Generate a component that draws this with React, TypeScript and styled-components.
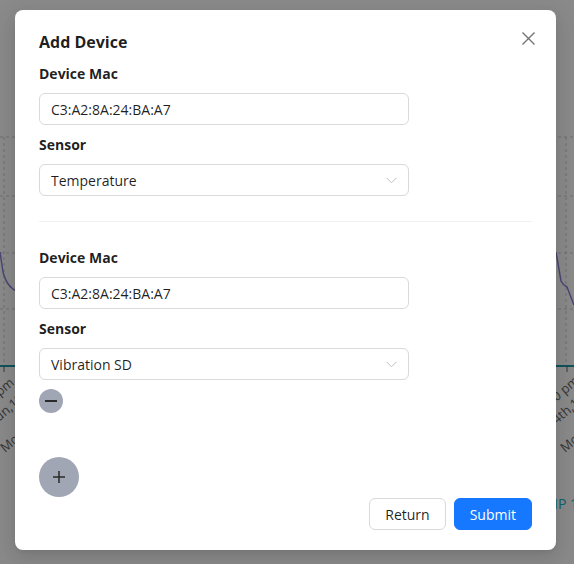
import React from 'react'
import styled, { createGlobalStyle } from 'styled-components'

const GlobalStyle = createGlobalStyle`
    * { box-sizing: border-box; }

    body {
        margin: 0;
        font-family: "Open Sans", "Noto Sans", sans-serif;
        color: rgba(0, 0, 0, 0.88);
    }
`

const ChartCanvas = styled.svg`
    position: fixed;
    inset: 0;
    width: 100%;
    height: 100%;
    background: #fff;
    font-family: "Open Sans", sans-serif;
`

const Mask = styled.div`
    position: fixed;
    inset: 0;
    background: rgba(0, 0, 0, 0.46);
`

const ModalWrap = styled.div`
    position: fixed;
    inset: 0;
    display: flex;
    justify-content: flex-start;
    align-items: flex-start;
    padding: 10px 0 0 15px;
`

const Modal = styled.div`
    position: relative;
    width: 541px;
    background: #fff;
    border-radius: 8px;
    padding: 20px 24px;
    box-shadow: 0 6px 16px 0 rgba(0, 0, 0, 0.08), 0 3px 6px -4px rgba(0, 0, 0, 0.12), 0 9px 28px 8px rgba(0, 0, 0, 0.05);
`

const Title = styled.h2`
    margin: 0 0 9px;
    font-size: 16px;
    line-height: 24px;
    font-weight: 700;
`

const CloseButton = styled.button`
    position: absolute;
    top: 17px;
    right: 17px;
    width: 22px;
    height: 22px;
    padding: 0;
    border: 0;
    background: transparent;
    display: flex;
    align-items: center;
    justify-content: center;
    color: #737373;
    cursor: pointer;
`

const Field = styled.div`
    width: 75%;

    & + & {
        margin-top: 9px;
    }
`

const Label = styled.label`
    display: block;
    padding-bottom: 8px;
    font-size: 14px;
    line-height: 22px;
    font-weight: 700;
`

const Input = styled.input`
    display: block;
    width: 100%;
    height: 32px;
    padding: 4px 11px;
    border: 1px solid #d9d9d9;
    border-radius: 6px;
    font: inherit;
    font-size: 14px;
    color: rgba(0, 0, 0, 0.88);
    outline: none;
`

const Select = styled.div`
    display: flex;
    align-items: center;
    justify-content: space-between;
    height: 32px;
    padding: 0 11px;
    border: 1px solid #d9d9d9;
    border-radius: 6px;
    font-size: 14px;
    color: rgba(0, 0, 0, 0.88);
`

const Divider = styled.hr`
    margin: 25px 0;
    border: 0;
    border-top: 1px solid rgba(5, 5, 5, 0.06);
`

const RoundButton = styled.button<{ $size: number; $gap: number }>`
    display: flex;
    align-items: center;
    justify-content: center;
    width: ${p => p.$size}px;
    height: ${p => p.$size}px;
    margin-top: ${p => p.$gap}px;
    padding: 0;
    border: 0;
    border-radius: 50%;
    background: #a1a6b4;
    color: #2a2a2a;
    cursor: pointer;
`

const Footer = styled.div`
    display: flex;
    justify-content: flex-end;
    gap: 8px;
    margin-top: 1px;
`

const Button = styled.button<{ $primary?: boolean }>`
    height: 32px;
    padding: 0 15px;
    border-radius: 6px;
    font: inherit;
    font-size: 14px;
    cursor: pointer;
    border: 1px solid ${p => (p.$primary ? '#1677ff' : '#d9d9d9')};
    background: ${p => (p.$primary ? '#1677ff' : '#fff')};
    color: ${p => (p.$primary ? '#fff' : 'rgba(0, 0, 0, 0.88)')};
`

const Chevron = () => (
    <svg width="11" height="7" viewBox="0 0 11 7" fill="none">
        <path d="M0.5 0.8 L5.5 5.8 L10.5 0.8" stroke="#bfbfbf" strokeWidth="1" />
    </svg>
)

const CloseIcon = () => (
    <svg width="13" height="13" viewBox="0 0 13 13">
        <path d="M0.5 0.5 L12.5 12.5 M12.5 0.5 L0.5 12.5" stroke="currentColor" strokeWidth="1.4" />
    </svg>
)

const MinusIcon = () => (
    <svg width="14" height="14" viewBox="0 0 14 14">
        <path d="M1 7 H13" stroke="currentColor" strokeWidth="2" />
    </svg>
)

const PlusIcon = () => (
    <svg width="12" height="12" viewBox="0 0 12 12">
        <path d="M0 6 H12 M6 0 V12" stroke="currentColor" strokeWidth="1.5" />
    </svg>
)

type Device = { mac: string; sensor: string }

const devices: Device[] = [
    { mac: 'C3:A2:8A:24:BA:A7', sensor: 'Temperature' },
    { mac: 'C3:A2:8A:24:BA:A7', sensor: 'Vibration SD' },
]

const gridRows = [137, 196, 253, 309]

// the line chart that sits on the page under the dialog
const BackgroundChart = () => (
    <ChartCanvas viewBox="0 0 574 564">
        {gridRows.map(y => (
            <line key={y} x1="0" x2="574" y1={y} y2={y} stroke="#ccc" strokeDasharray="3 3" />
        ))}
        <line x1="4" x2="4" y1="137" y2="366" stroke="#ccc" strokeDasharray="3 3" />
        <line x1="566" x2="566" y1="137" y2="366" stroke="#ccc" strokeDasharray="3 3" />
        <path d="M0 252 L3 272 Q6 284 13 289 L20 293" fill="none" stroke="#8884d8" strokeWidth="1.5" />
        <path d="M556 252 L561 281 Q563 285 567 287 L574 305" fill="none" stroke="#8884d8" strokeWidth="1.5" />
        <line x1="0" x2="574" y1="366" y2="366" stroke="#1a9aa8" strokeWidth="2" />
        <line x1="4" x2="4" y1="366" y2="372" stroke="#666" />
        <line x1="567" x2="567" y1="366" y2="372" stroke="#666" />
        <g fill="#666" fontSize="13">
            <text x="15" y="384" textAnchor="end" transform="rotate(-40 15 384)">12:00 pm</text>
            <text x="25" y="400" textAnchor="end" transform="rotate(-40 25 400)">Jun,13</text>
            <text x="5" y="453" transform="rotate(-40 5 453)">Mon</text>
            <text x="580" y="382" textAnchor="end" transform="rotate(-40 580 382)">12:00 pm</text>
            <text x="586" y="400" textAnchor="end" transform="rotate(-40 586 400)">Jun 4th,13</text>
            <text x="565" y="453" transform="rotate(-40 565 453)">Mon</text>
        </g>
        <text x="586" y="509" textAnchor="end" fill="#1fb5c8" fontSize="14">TEMP 12</text>
    </ChartCanvas>
)

const DeviceBlock = ({ device, removable }: { device: Device; removable?: boolean }) => (
    <div>
        <Field>
            <Label>Device Mac</Label>
            <Input defaultValue={device.mac} />
        </Field>
        <Field>
            <Label>Sensor</Label>
            <Select>
                <span>{device.sensor}</span>
                <Chevron />
            </Select>
        </Field>
        {removable && (
            <RoundButton $size={24} $gap={9}>
                <MinusIcon />
            </RoundButton>
        )}
    </div>
)

const App = () => {
    return (
        <>
            <GlobalStyle />
            <BackgroundChart />
            <Mask />
            <ModalWrap>
                <Modal>
                    <Title>Add Device</Title>
                    <CloseButton>
                        <CloseIcon />
                    </CloseButton>
                    {devices.map((d, i) => (
                        <React.Fragment key={i}>
                            {i > 0 && <Divider />}
                            <DeviceBlock device={d} removable={i > 0} />
                        </React.Fragment>
                    ))}
                    <RoundButton $size={40} $gap={44}>
                        <PlusIcon />
                    </RoundButton>
                    <Footer>
                        <Button>Return</Button>
                        <Button $primary>Submit</Button>
                    </Footer>
                </Modal>
            </ModalWrap>
        </>
    )
}

export default App
